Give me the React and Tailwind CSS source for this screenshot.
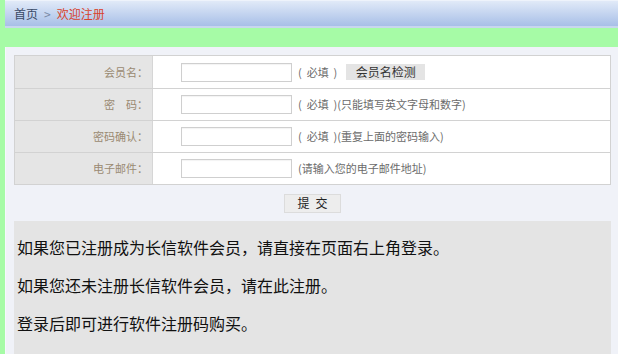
export default function App() {
  const font = { fontFamily: '"Noto Sans CJK SC", "Noto Sans", sans-serif' };
  const rows = [
    { label: "会员名：", extra: "check" },
    { label: "密\u3000码：", extra: "(只能填写英文字母和数字)" },
    { label: "密码确认：", extra: "(重复上面的密码输入)" },
    { label: "电子邮件：", extra: "email" },
  ];
  return (
    <div className="w-[618px] h-[354px] overflow-hidden bg-[#a6fba6] pl-[5px] flex flex-col" style={font}>
      <div className="h-[28px] shrink-0 bg-gradient-to-b from-[#e1eaf8] to-[#a8bfe7] border-t border-t-[#eef3fb] border-b-2 border-b-[#c8d6ee] flex items-center pl-[9px] text-[12px] leading-none">
        <span className="text-[#3a4a66]">首页</span>
        <span className="text-[#7a8aa6] mx-[6px]">&gt;</span>
        <span className="text-[#d8432c]">欢迎注册</span>
      </div>
      <div className="h-[19px] shrink-0" />
      <div className="flex-1 bg-[#f0f2f8] border-l border-l-[#f6f8fc] pl-[8px] pt-[8px] pr-[7px]">
        <div className="border border-[#d2d2d2] bg-white">
          {rows.map((r, i) => (
            <div key={i} className={"flex h-[32px] " + (i > 0 ? "border-t border-t-[#d2d2d2]" : "")}>
              <div className="w-[138px] shrink-0 bg-[#e5e5e5] border-r border-r-[#d6d6d6] flex items-center justify-end pr-[4px] text-[11px] text-[#9a8a72]">
                {r.label}
              </div>
              <div className="flex-1 flex items-center pl-[28px] text-[11px] text-[#6b6b6b]">
                <div className="w-[111px] h-[19px] border border-[#cfcfcf] bg-white mr-[6px] shadow-[inset_0_1px_1px_rgba(0,0,0,0.05)]" />
                {r.extra === "email" ? (
                  <span>(请输入您的电子邮件地址)</span>
                ) : (
                  <>
                    <span className="whitespace-pre">(  必填  )</span>
                    {r.extra === "check" ? (
                      <span className="ml-[9px] w-[79px] h-[16px] bg-[#e4e4e4] flex items-center justify-center text-[12px] text-[#333]">会员名检测</span>
                    ) : (
                      <span>{r.extra}</span>
                    )}
                  </>
                )}
              </div>
            </div>
          ))}
        </div>
        <div className="h-[36px] flex items-center justify-center">
          <div className="w-[57px] h-[19px] bg-[#ededed] border border-[#dcdcdc] flex items-center justify-center text-[12px] text-[#222] tracking-[6px] pl-[6px]">
            提交
          </div>
        </div>
        <div className="bg-[#e4e4e4] h-[140px] pl-[3px] pt-[7px] text-[16px] leading-[38px] text-[#111]">
          <p>如果您已注册成为长信软件会员，请直接在页面右上角登录。</p>
          <p>如果您还未注册长信软件会员，请在此注册。</p>
          <p>登录后即可进行软件注册码购买。</p>
        </div>
      </div>
    </div>
  );
}
